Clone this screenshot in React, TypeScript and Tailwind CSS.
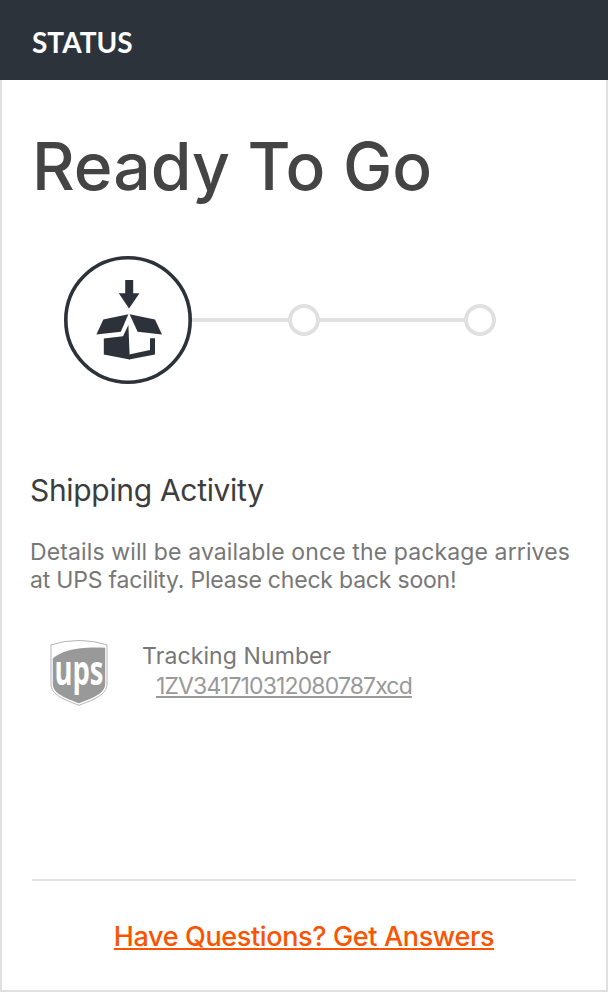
import React from "react";

function PackageIcon() {
  return (
    <svg viewBox="0 0 128 128" className="h-32 w-32 shrink-0">
      <circle cx="64" cy="64" r="62.2" fill="none" stroke="#2d323a" strokeWidth="3.6" />
      <g fill="#2d323a" strokeLinejoin="round">
        <path d="M61.2 24h8v13.3h6.3L65 52.5 54.8 37.3h6.4z" />
        <path d="M39.3 63.6L64.4 58.2 56.8 75.8 32.4 78.4z" />
        <path d="M65.6 58.2L91 63.6 98 78.4 73.6 75.8z" />
        <path d="M39.8 82.4L59 80.2 64.4 69 65.6 99V103.6L39.8 98.4z" />
        <path d="M65 98.4L86 94V82.2H91V98.4L65 103.6z" />
      </g>
    </svg>
  );
}

function UpsLogo() {
  return (
    <svg viewBox="0 0 58 66" className="h-[66px] w-[58px] overflow-visible">
      <path
        d="M1 4.8Q14 .5 29 .5T57 4.8V44C57 55 43 60 29 65.3 15 60 1 55 1 44z"
        fill="#fff" stroke="#aaa" strokeWidth=".9"
      />
      <path d="M2.8 18.5C12 11 26 6.5 55.2 7.8V44C55.2 54 41 58.5 29 63.3 17 58.5 2.8 54 2.8 44z" fill="#999" />
      <text
        x="4.4" y="45.4" textLength="49" lengthAdjust="spacingAndGlyphs"
        className="fill-white font-['Open_Sans',sans-serif] text-[41px] font-bold"
      >ups</text>
    </svg>
  );
}

function Step() {
  return <span className="h-8 w-8 shrink-0 rounded-full border-4 border-[#e0e0e0] bg-white" />;
}

export default function App() {
  return (
    <div className="flex h-[992px] w-[608px] flex-col bg-white font-['Inter',sans-serif]">
      <header className="h-20 bg-[#2d333b] px-8 pt-0.5">
        <h2 className="font-['Lato',sans-serif] text-[28px] font-bold leading-[80px] text-white">STATUS</h2>
      </header>
      <main className="flex flex-1 flex-col border-x-2 border-b-2 border-[#e0e0e0] px-[30px] pt-[46px]">
        <h1 className="h-20 whitespace-nowrap text-[66px] font-medium leading-[80px] text-[#444]">
          Ready To Go
        </h1>
        <div className="mt-[50px] flex items-center pl-8">
          <PackageIcon />
          <span className="h-1 w-24 bg-[#e0e0e0]" />
          <Step />
          <span className="h-1 w-36 bg-[#e0e0e0]" />
          <Step />
        </div>
        <h3 className="-ml-0.5 mt-[86px] text-[30px] leading-10 tracking-[-0.32px] text-[#3d3d3d]">Shipping Activity</h3>
        <div className="-ml-0.5 mt-[28px] whitespace-nowrap text-[23px] leading-7 text-[#777]">
          <p className="tracking-[0.12px]">Details will be available once the package arrives</p>
          <p className="tracking-[-0.2px]">at UPS facility. Please check back soon!</p>
        </div>
        <div className="mt-[46px] flex pl-[18px]">
          <UpsLogo />
          <div className="ml-[34px] pt-px text-[23px] leading-[30px] text-[#777]">
            <p className="tracking-[0.1px]">Tracking Number</p>
            <a className="ml-3.5 block whitespace-nowrap tracking-[-0.87px] text-[#999] underline decoration-2 underline-offset-2">
              1ZV341710312080787xcd
            </a>
          </div>
        </div>
        <div className="mt-auto h-[111px] border-t-2 border-[#e0e0e0] pt-9 text-center">
          <a className="text-[27px] font-medium leading-10 tracking-[-0.36px] text-[#fa5400] underline decoration-2 underline-offset-2">
            Have Questions? Get Answers
          </a>
        </div>
      </main>
    </div>
  );
}
